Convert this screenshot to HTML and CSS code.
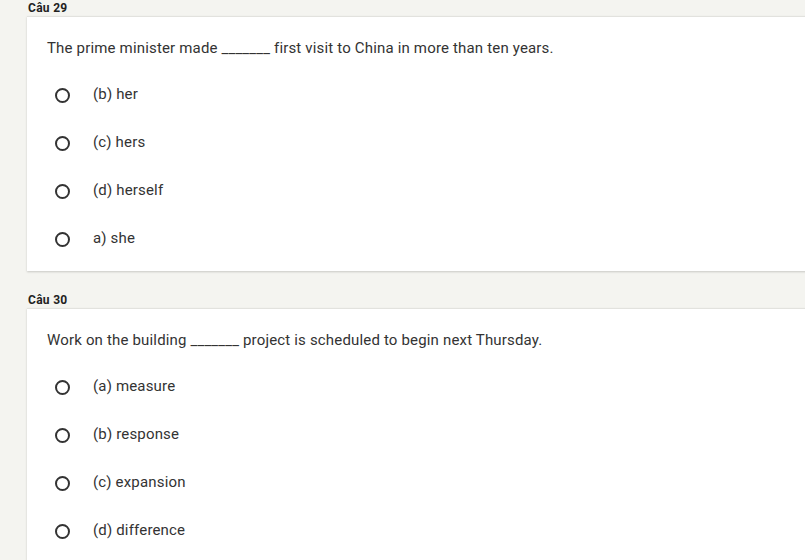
FILE: index.html
```html
<!DOCTYPE html>
<html>
<head>
<meta charset="utf-8">
<link rel="stylesheet" href="styles.css">
</head>
<body>
<div class="page">
  <section class="q">
    <div class="q-label">Câu 29</div>
    <div class="card">
      <div class="q-text">The prime minister made _______ first visit to China in more than ten years.</div>
      <div class="options">
        <label class="opt"><span class="radio"></span><span>(b) her</span></label>
        <label class="opt"><span class="radio"></span><span>(c) hers</span></label>
        <label class="opt"><span class="radio"></span><span>(d) herself</span></label>
        <label class="opt"><span class="radio"></span><span>a) she</span></label>
      </div>
    </div>
  </section>
  <section class="q">
    <div class="q-label">Câu 30</div>
    <div class="card">
      <div class="q-text">Work on the building _______ project is scheduled to begin next Thursday.</div>
      <div class="options">
        <label class="opt"><span class="radio"></span><span>(a) measure</span></label>
        <label class="opt"><span class="radio"></span><span>(b) response</span></label>
        <label class="opt"><span class="radio"></span><span>(c) expansion</span></label>
        <label class="opt"><span class="radio"></span><span>(d) difference</span></label>
      </div>
    </div>
  </section>
</div>
</body>
</html>
```
FILE: styles.css
```css
html, body {
  margin: 0;
  padding: 0;
  background: #f4f4f0;
  font-family: Roboto, "Liberation Sans", Arial, sans-serif;
  color: #333;
  overflow: hidden;
}
.page {
  padding-left: 27px;
  display: flex;
  flex-direction: column;
  gap: 21px;
}
.q-label {
  font-size: 12px;
  font-weight: 700;
  line-height: 16px;
  letter-spacing: 0.3px;
  color: #222;
  padding-left: 1px;
}
.card {
  width: 800px;
  background: #fff;
  border-top: 1px solid #e2e2de;
  box-shadow: 0 1px 2px rgba(0,0,0,0.18);
  padding: 21px 0 8px 20px;
  box-sizing: border-box;
}
.q-text {
  font-size: 15px;
  line-height: 20px;
  letter-spacing: 0.17px;
}
.options {
  margin-top: 13px;
  display: flex;
  flex-direction: column;
}
.opt {
  height: 48px;
  display: flex;
  align-items: center;
  padding-left: 8px;
  font-size: 15px;
  letter-spacing: 0.17px;
  line-height: 20px;
}
.opt span:last-child {
  position: relative;
  top: -1px;
}
.radio {
  width: 11px;
  height: 11px;
  border: 2px solid #333;
  border-radius: 50%;
  margin-right: 23px;
  flex: none;
}
```
